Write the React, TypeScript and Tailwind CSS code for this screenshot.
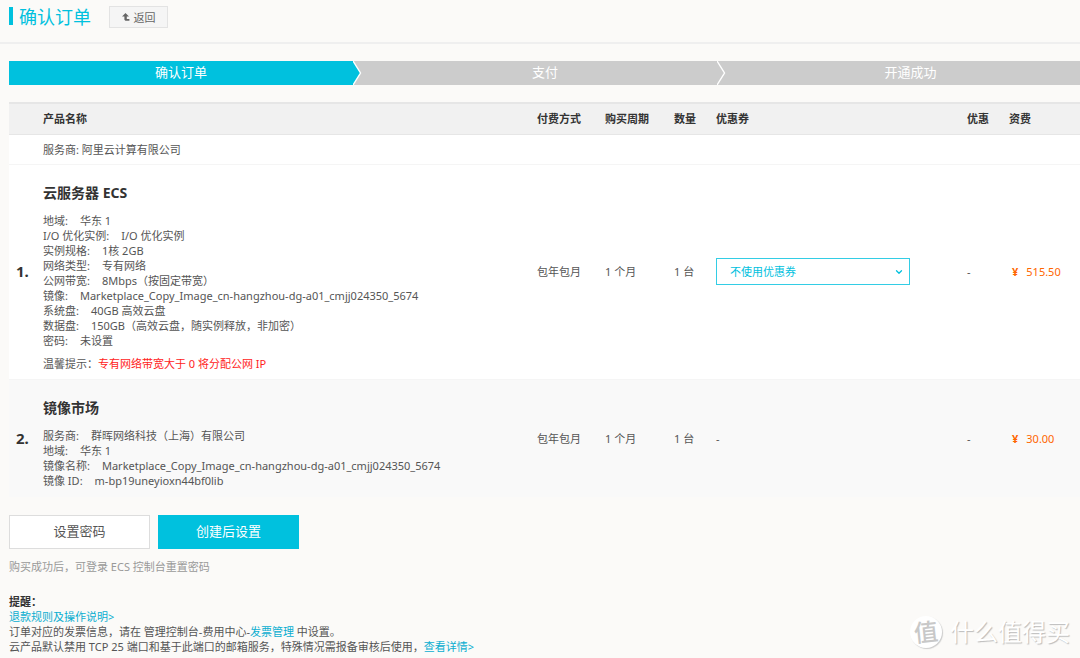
import { ChevronDown } from "lucide-react";

interface Spec {
  label: string;
  value: string;
}

interface OrderItem {
  id: number;
  name: string;
  specs: Spec[];
  hint?: { label: string; text: string };
  payment: string;
  period: string;
  quantity: string;
  hasCoupon: boolean;
  price: string;
}

const steps = [
  { label: "确认订单", className: "bg-[#00c1de]" },
  { label: "支付", className: "pl-5" },
  { label: "开通成功", className: "pl-6" },
];

const items: OrderItem[] = [
  {
    id: 1,
    name: "云服务器 ECS",
    specs: [
      { label: "地域", value: "华东 1" },
      { label: "I/O 优化实例", value: "I/O 优化实例" },
      { label: "实例规格", value: "1核 2GB" },
      { label: "网络类型", value: "专有网络" },
      { label: "公网带宽", value: "8Mbps（按固定带宽）" },
      {
        label: "镜像",
        value: "Marketplace_Copy_Image_cn-hangzhou-dg-a01_cmjj024350_5674",
      },
      { label: "系统盘", value: "40GB 高效云盘" },
      { label: "数据盘", value: "150GB（高效云盘，随实例释放，非加密）" },
      { label: "密码", value: "未设置" },
    ],
    hint: { label: "温馨提示：", text: "专有网络带宽大于 0 将分配公网 IP" },
    payment: "包年包月",
    period: "1 个月",
    quantity: "1 台",
    hasCoupon: true,
    price: "515.50",
  },
  {
    id: 2,
    name: "镜像市场",
    specs: [
      { label: "服务商", value: "群晖网络科技（上海）有限公司" },
      { label: "地域", value: "华东 1" },
      {
        label: "镜像名称",
        value: "Marketplace_Copy_Image_cn-hangzhou-dg-a01_cmjj024350_5674",
      },
      { label: "镜像 ID", value: "m-bp19uneyioxn44bf0lib" },
    ],
    payment: "包年包月",
    period: "1 个月",
    quantity: "1 台",
    hasCoupon: false,
    price: "30.00",
  },
];

function Header() {
  return (
    <header className="flex h-[44px] items-start border-b-2 border-[#efefef] px-[9px] pt-[6px]">
      <span className="mt-px mr-[6px] h-[18px] w-1 bg-[#00c1de]" />
      <h1 className="text-lg leading-[22px] text-[#00c1de]">确认订单</h1>
      <button
        type="button"
        className="ml-[18px] flex h-[22px] w-[59px] items-center justify-center gap-1 border border-[#e3e3e3] bg-[#f5f5f5] text-[#666]"
      >
        <svg className="h-2 w-2" viewBox="0 0 8 8" fill="currentColor">
          <path d="M3.5 0 7 3.4H4.8V6H7.4V7.8H3.4L2.4 6.8V3.4H0Z" />
        </svg>
        返回
      </button>
    </header>
  );
}

function Steps() {
  return (
    <ol className="mt-[17px] ml-[9px] grid h-6 grid-cols-[344px_364px_1fr] bg-[#ccc] text-[13px] text-white">
      {steps.map((step, i) => (
        <li
          key={step.label}
          className={`relative flex items-center justify-center pb-[2px] ${step.className}`}
        >
          {step.label}
          {i < steps.length - 1 && (
            <svg
              className="absolute top-0 left-full z-10 h-6 w-[9px]"
              viewBox="0 0 9 24"
            >
              <path
                d="M0 0 7.5 12 0 24Z"
                className={i === 0 ? "fill-[#00c1de]" : "fill-[#ccc]"}
              />
              <path
                d="M0 0 7.5 12 0 24"
                fill="none"
                stroke="#fff"
                strokeWidth="1.4"
              />
            </svg>
          )}
        </li>
      ))}
    </ol>
  );
}

function CouponSelect() {
  return (
    <div className="relative h-[27px] w-[194px]">
      <select
        aria-label="优惠券"
        className="h-full w-full appearance-none border border-[#33cde5] bg-white px-[13px] text-[#00c1de]"
      >
        <option>不使用优惠券</option>
      </select>
      <ChevronDown
        className="pointer-events-none absolute top-[9px] right-[6px] h-[10px] w-[10px] text-[#00c1de]"
        strokeWidth={3}
      />
    </div>
  );
}

function ItemRow({ item }: { item: OrderItem }) {
  const even = item.id % 2 === 0;
  return (
    <tr className={even ? "bg-[#f9f9f9]" : "border-b border-[#f5f5f5] bg-white"}>
      <td className="pl-[7px] text-[15px] font-bold text-[#333]">{item.id}.</td>
      <td className={even ? "pt-[18px] pb-[9px]" : "pt-[18px] pb-2"}>
        <h2 className="mb-[10px] text-sm leading-5 font-bold text-[#333]">
          {item.name}
        </h2>
        <dl>
          {item.specs.map((spec) => (
            <div key={spec.label} className="flex gap-3">
              <dt>{spec.label}:</dt>
              <dd>{spec.value}</dd>
            </div>
          ))}
        </dl>
        {item.hint && (
          <p className="mt-2">
            {item.hint.label}
            <span className="text-[#f22]">{item.hint.text}</span>
          </p>
        )}
      </td>
      <td>{item.payment}</td>
      <td>{item.period}</td>
      <td>{item.quantity}</td>
      <td>{item.hasCoupon ? <CouponSelect /> : "-"}</td>
      <td>-</td>
      <td className="text-[#f60]">
        <span className="mr-2 ml-[3px] font-bold">¥</span>
        <span>{item.price}</span>
      </td>
    </tr>
  );
}

function OrderTable() {
  return (
    <div className="mt-[17px] ml-[9px]">
      <table className="w-full table-fixed border-collapse text-left">
        <colgroup>
          <col className="w-[34px]" />
          <col />
          <col className="w-[68px]" />
          <col className="w-[69px]" />
          <col className="w-[42px]" />
          <col className="w-[251px]" />
          <col className="w-[42px]" />
          <col className="w-[71px]" />
        </colgroup>
        <thead>
          <tr className="h-[31px] border-t-2 border-b border-[#e6e6e6] bg-[#f1f1f1] text-[#333]">
            <th />
            <th>产品名称</th>
            <th>付费方式</th>
            <th>购买周期</th>
            <th>数量</th>
            <th>优惠券</th>
            <th>优惠</th>
            <th>资费</th>
          </tr>
        </thead>
        <tbody>
          <tr className="h-[30px] border-b border-[#f5f5f5] bg-white">
            <td />
            <td colSpan={7}>服务商: 阿里云计算有限公司</td>
          </tr>
          {items.map((item) => (
            <ItemRow key={item.id} item={item} />
          ))}
        </tbody>
      </table>
    </div>
  );
}

function Watermark() {
  return (
    <div className="pointer-events-none absolute right-[10px] bottom-[10px] flex items-center gap-2 text-white">
      <span className="flex h-8 w-8 items-center justify-center rounded-full bg-white text-2xl font-medium text-[#c8c8c8] shadow-[1px_1px_1px_#ccc]">
        <span className="-rotate-6">值</span>
      </span>
      <span className="text-2xl leading-8 [text-shadow:1px_1px_1px_#bbb]">
        什么值得买
      </span>
    </div>
  );
}

export default function App() {
  return (
    <div className="relative min-h-screen overflow-hidden bg-[#fbfaf8] font-['Noto_Sans','Noto_Sans_CJK_SC',sans-serif] text-[11px] leading-[15px] text-[#555]">
      <Header />
      <Steps />
      <OrderTable />

      <div className="mt-[18px] flex gap-2 px-[9px] text-[13px]">
        <button
          type="button"
          className="h-[34px] w-[141px] border border-[#ddd] bg-white text-[#555]"
        >
          设置密码
        </button>
        <button type="button" className="h-[34px] w-[141px] bg-[#00c1de] text-white">
          创建后设置
        </button>
      </div>
      <p className="mt-[10px] px-[9px] text-[#999]">
        购买成功后，可登录 ECS 控制台重置密码
      </p>

      <section className="mt-5 px-[9px] pb-[3px]">
        <h3 className="font-bold text-[#333]">提醒：</h3>
        <p>
          <a href="#refund" className="text-[#0aaed0]">
            退款规则及操作说明&gt;
          </a>
        </p>
        <p>
          订单对应的发票信息，请在 管理控制台-费用中心-
          <a href="#invoice" className="text-[#0aaed0]">
            发票管理
          </a>{" "}
          中设置。
        </p>
        <p>
          云产品默认禁用 TCP 25 端口和基于此端口的邮箱服务，特殊情况需报备审核后使用，
          <a href="#detail" className="text-[#0aaed0]">
            查看详情&gt;
          </a>
        </p>
      </section>
      <Watermark />
    </div>
  );
}
